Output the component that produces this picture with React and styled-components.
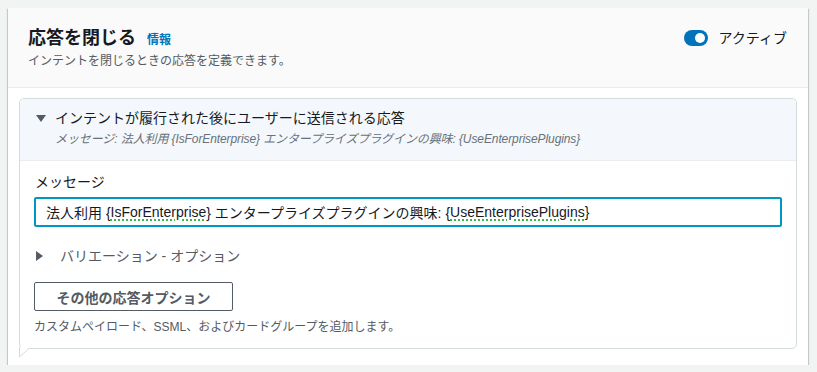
import React from 'react';
import styled, { createGlobalStyle } from 'styled-components';

const GlobalStyle = createGlobalStyle`
body {
  margin: 0;
  background: #f2f3f3;
  font-family: "Liberation Sans", "Noto Sans CJK JP", sans-serif;
  color: #16191f;
}
`

const Page = styled.div`
padding: 8px 9px 0 8px;
`

const Panel = styled.div`
background: #ffffff;
box-shadow: 0 1px 1px 0 rgba(0,28,36,0.3), 1px 1px 1px 0 rgba(0,28,36,0.15), -1px 1px 1px 0 rgba(0,28,36,0.15);
`

const Header = styled.div`
display: flex;
justify-content: space-between;
align-items: flex-start;
background: #fafafa;
border-bottom: 1px solid #eaeded;
padding: 19px 21px 18px 20px;
`

const TitleRow = styled.div`
display: flex;
align-items: baseline;
gap: 11px;
`

const Title = styled.h2`
margin: 0;
font-size: 18px;
line-height: 22px;
font-weight: 700;
color: #16191f;
`

const InfoLink = styled.a`
font-size: 12px;
font-weight: 700;
color: #0073bb;
text-decoration: none;
`

const Description = styled.div`
margin-top: 4px;
font-size: 12px;
line-height: 16px;
color: #545b64;
`

const ToggleWrap = styled.div`
display: flex;
align-items: center;
gap: 11px;
margin-top: 1px;
`

const Toggle = styled.div`
width: 24px;
height: 16px;
border-radius: 8px;
background: ${p => (p.$on ? '#0073bb' : '#879596')};
display: flex;
align-items: center;
justify-content: ${p => (p.$on ? 'flex-end' : 'flex-start')};
padding: 0 3px;
box-sizing: border-box;
`

const Knob = styled.span`
width: 10px;
height: 10px;
border-radius: 50%;
background: #ffffff;
`

const ToggleLabel = styled.span`
font-size: 14px;
line-height: 20px;
color: #16191f;
`

const Content = styled.div`
padding: 10px 11px 16px 11px;
`

const Card = styled.div`
position: relative;
border: 1px solid #d5dbdb;
border-radius: 5px;
background: #ffffff;
`

const CardHeader = styled.div`
display: flex;
align-items: flex-start;
gap: 9px;
background: #f4f8fc;
border-bottom: 1px solid #eaeded;
border-radius: 5px 5px 0 0;
padding: 9px 20px 13px 16px;
`

const Caret = styled.span`
flex: none;
width: 0;
height: 0;
margin-top: ${p => (p.$dir === 'down' ? '7px' : '5px')};
border-style: solid;
border-color: transparent;
${p => p.$dir === 'down'
    ? 'border-width: 7px 5px 0 5px; border-top-color: #545b64;'
    : 'border-width: 5px 0 5px 7px; border-left-color: #545b64;'}
`

const CardTitle = styled.div`
font-size: 14px;
line-height: 20px;
color: #16191f;
`

const CardSub = styled.div`
margin-top: 3px;
font-size: 12px;
line-height: 16px;
font-style: italic;
color: #687078;
letter-spacing: -0.1px;
`

const CardBody = styled.div`
padding: 11px 14px 13px 14px;
`

const Label = styled.div`
font-size: 14px;
line-height: 20px;
color: #16191f;
padding-left: 1px;
margin-bottom: 5px;
`

const Input = styled.div`
height: 30px;
box-sizing: border-box;
border: 2px solid #0097c4;
border-radius: 2px;
padding: 0 10px;
display: flex;
align-items: center;
font-size: 14px;
color: #16191f;
white-space: pre;
`

const Spell = styled.span`
text-decoration-line: underline;
text-decoration-style: dotted;
text-decoration-color: #3fb549;
text-decoration-thickness: 2px;
text-underline-offset: 2px;
`

const Expander = styled.div`
display: flex;
align-items: flex-start;
gap: 17px;
margin-top: 19px;
padding-left: 2px;
font-size: 14px;
line-height: 20px;
color: #545b64;
`

const Button = styled.button`
display: block;
margin-top: 16px;
width: 199px;
height: 29px;
background: #ffffff;
border: 1px solid #545b64;
border-radius: 2px;
font-family: inherit;
font-size: 14px;
font-weight: 700;
color: #545b64;
cursor: pointer;
`

const Hint = styled.div`
margin-top: 8px;
font-size: 12px;
line-height: 16px;
color: #545b64;
`

const Tail = styled.svg`
position: absolute;
left: -1px;
bottom: -10px;
`

export default function App() {
  return (
    <>
      <GlobalStyle />
      <Page>
        <Panel>
          <Header>
            <div>
              <TitleRow>
                <Title>応答を閉じる</Title>
                <InfoLink href="#">情報</InfoLink>
              </TitleRow>
              <Description>インテントを閉じるときの応答を定義できます。</Description>
            </div>
            <ToggleWrap>
              <Toggle $on><Knob /></Toggle>
              <ToggleLabel>アクティブ</ToggleLabel>
            </ToggleWrap>
          </Header>
          <Content>
            <Card>
              <CardHeader>
                <Caret $dir="down" />
                <div>
                  <CardTitle>インテントが履行された後にユーザーに送信される応答</CardTitle>
                  <CardSub>メッセージ: 法人利用 {'{IsForEnterprise}'} エンタープライズプラグインの興味: {'{UseEnterprisePlugins}'}</CardSub>
                </div>
              </CardHeader>
              <CardBody>
                <Label>メッセージ</Label>
                <Input>
                  法人利用 {'{'}<Spell>IsForEnterprise</Spell>{'}'} エンタープライズプラグインの興味: {'{'}<Spell>UseEnterprisePlugins</Spell>{'}'}
                </Input>
                <Expander>
                  <Caret $dir="right" />
                  バリエーション - オプション
                </Expander>
                <Button>その他の応答オプション</Button>
                <Hint>カスタムペイロード、SSML、およびカードグループを追加します。</Hint>
              </CardBody>
              <Tail width="14" height="11" viewBox="0 0 14 11">
                <path d="M0.5 0 L0.5 10 L11 0.5" fill="#ffffff" stroke="#d5dbdb" strokeWidth="1" />
                <rect x="1" y="0" width="10" height="1" fill="#ffffff" />
              </Tail>
            </Card>
          </Content>
        </Panel>
      </Page>
    </>
  );
}
